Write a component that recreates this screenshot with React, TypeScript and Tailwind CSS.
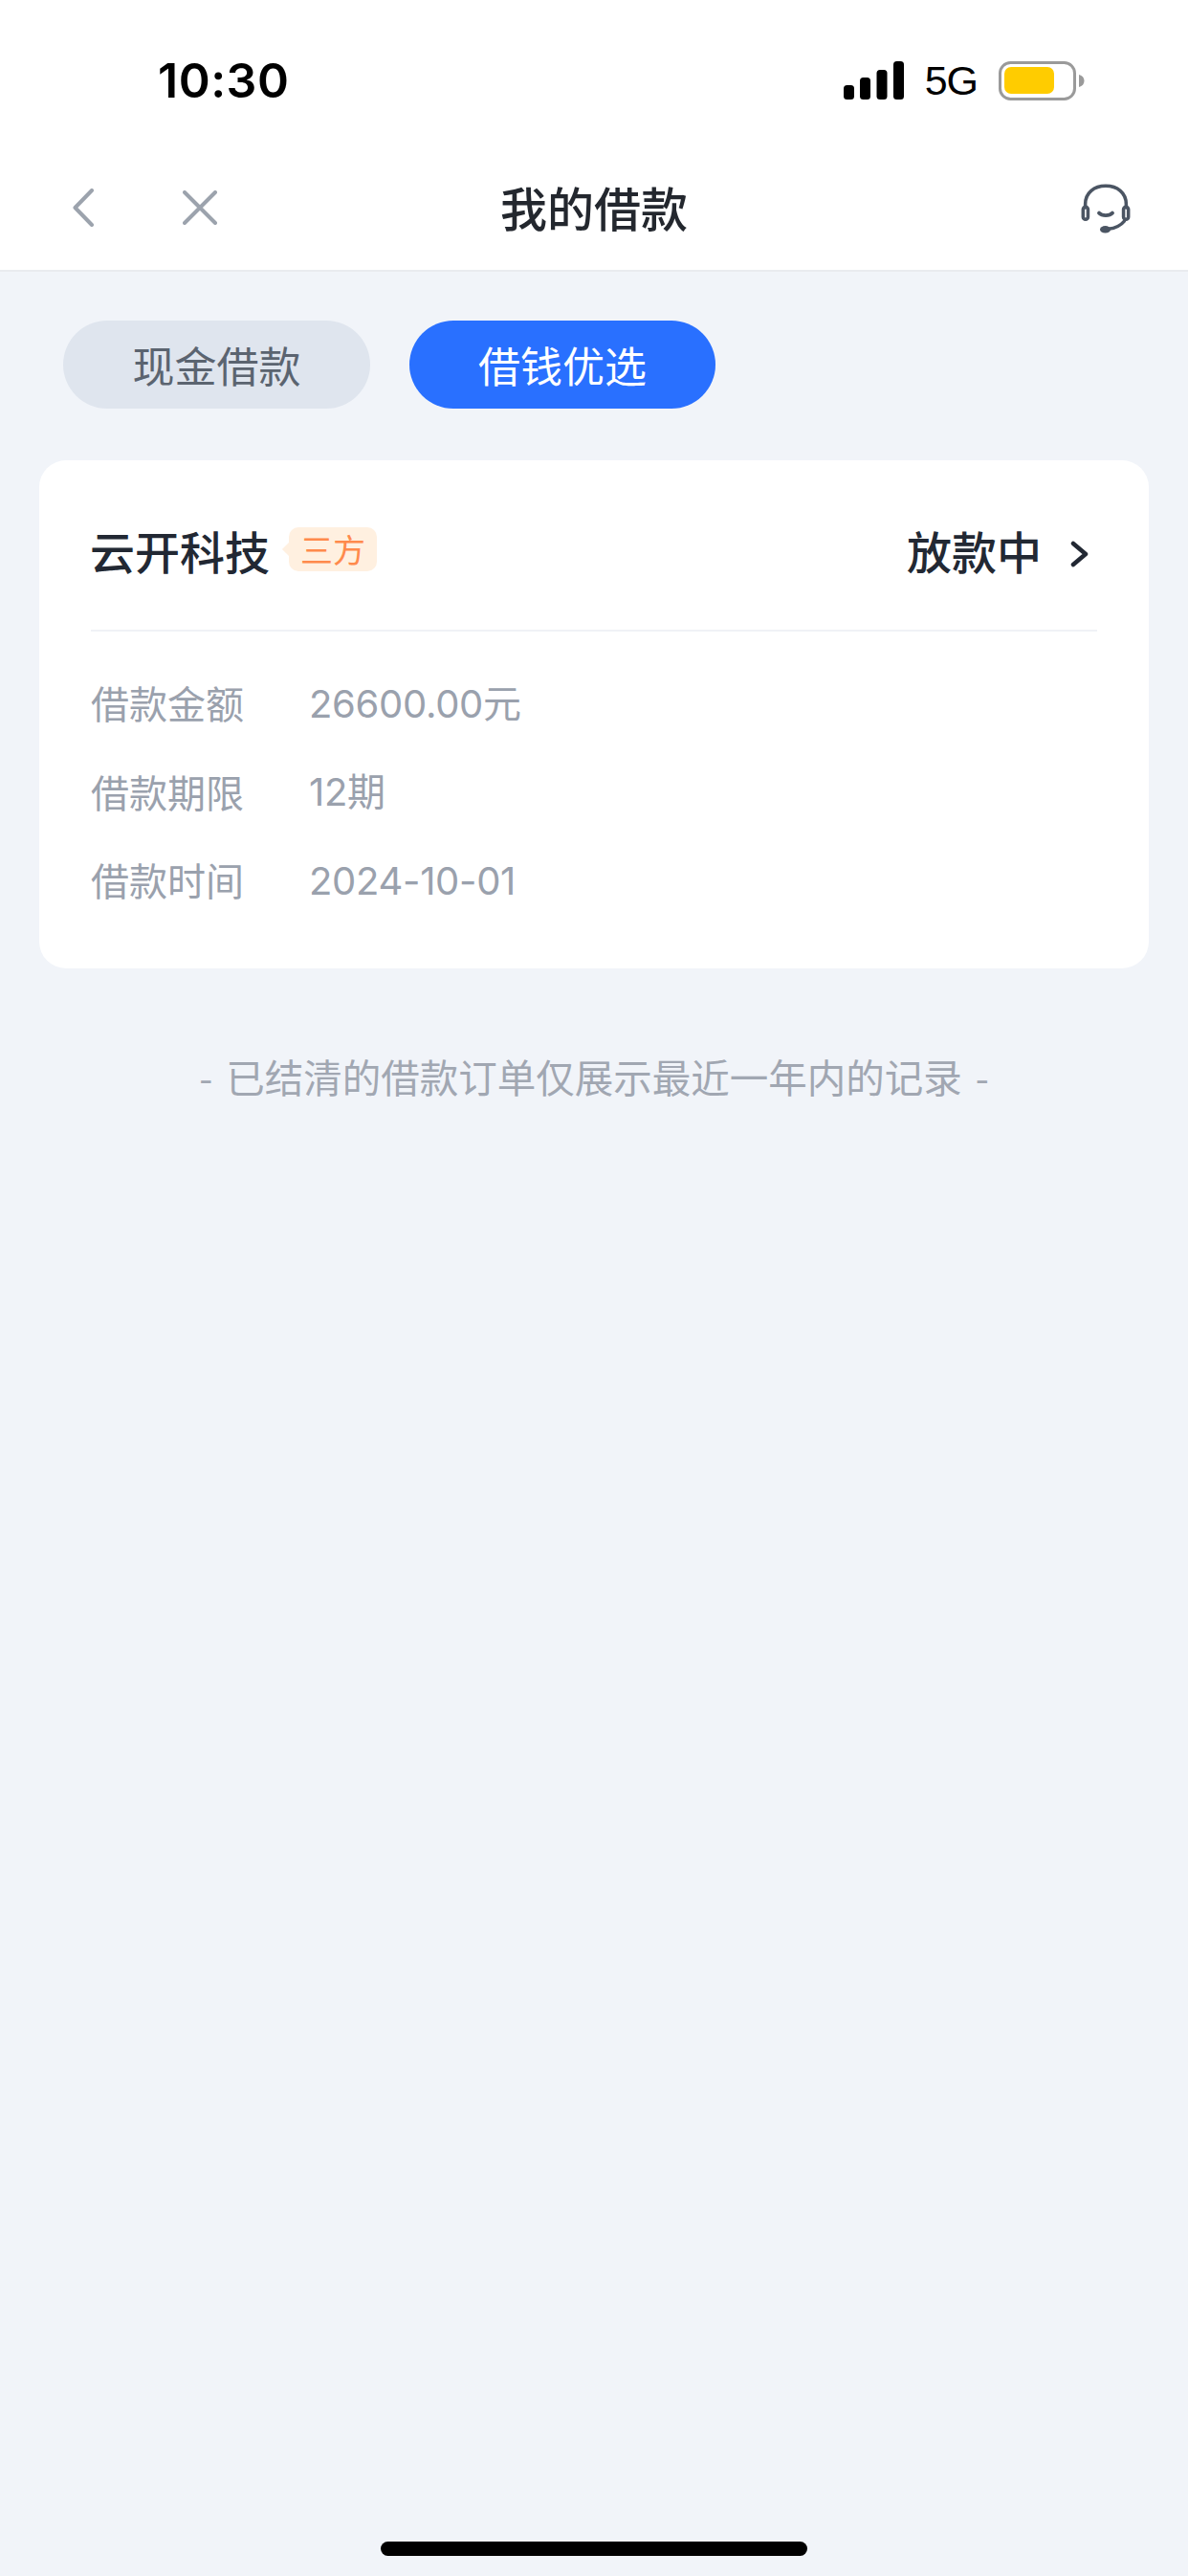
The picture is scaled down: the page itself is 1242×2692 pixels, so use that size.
const CJK = '"Noto Sans CJK SC", "Noto Sans", sans-serif';

function Signal() {
  return (
    <svg width="63" height="40" viewBox="0 0 63 40" className="block" fill="#000">
      <rect x="0" y="25" width="11" height="15" rx="3.5" />
      <rect x="17" y="17" width="11" height="23" rx="3.5" />
      <rect x="34.500" y="9" width="11" height="31" rx="3.5" />
      <rect x="52" y="0" width="11" height="40" rx="3.5" />
    </svg>
  );
}

function Battery() {
  return (
    <svg width="90" height="41" viewBox="0 0 90 41" className="block">
      <rect x="1.500" y="1.500" width="78" height="38" rx="11" fill="none" stroke="#9a9a9a" strokeWidth="3" />
      <rect x="6" y="6" width="52" height="28" rx="7" fill="#ffcc00" />
      <path d="M84 14 C87.500 15 89.500 17 89.500 20.500 C89.500 24 87.500 26 84 27 Z" fill="#9a9a9a" />
    </svg>
  );
}

function Headset() {
  return (
    <svg width="52" height="52" viewBox="0 0 56 56" fill="none" stroke="#4b5563" strokeWidth="3.800" strokeLinecap="round" className="block">
      <path d="M5 27 V23 C5 10 15 2.500 28 2.500 C41 2.500 51 10 51 23 V27" />
      <rect x="2.500" y="26" width="5.500" height="14" rx="2.700" />
      <rect x="48" y="26" width="5.500" height="14" rx="2.700" />
      <path d="M20.500 33 C24 36.500 32 36.500 35.500 33" strokeWidth="4.200" />
      <path d="M49 42 C45 47 39 50 31 51" />
      <ellipse cx="27.500" cy="51.500" rx="6" ry="4" fill="#4b5563" stroke="none" />
    </svg>
  );
}

function Row({ label, value }: { label: string; value: string }) {
  return (
    <div className="flex h-[92.5px] items-center text-[40px] leading-none text-[#9aa1ad]">
      <span className="w-[228px]">{label}</span>
      <span className="pt-[3px] font-['Inter','Noto_Sans_CJK_SC',sans-serif] tracking-[-0.3px]">{value}</span>
    </div>
  );
}

export default function App() {
  return (
    <div className="flex h-[2692px] w-[1242px] flex-col overflow-hidden bg-[#f1f4f9]" style={{ fontFamily: CJK }}>
      <header className="border-b-2 border-[#e9ebef] bg-white">
        <div className="flex h-[150px] items-center justify-between pt-[18px] pl-[165px] pr-[108px]">
          <span className="font-['Inter',sans-serif] text-[50px] leading-none font-semibold tracking-[0.5px] text-black">10:30</span>
          <div className="flex items-center gap-[22px]">
            <Signal />
            <span className="font-['Liberation_Sans',sans-serif] text-[43px] leading-none tracking-[-1px] text-black">5G</span>
            <Battery />
          </div>
        </div>
        <nav className="relative flex h-[132px] items-center justify-center pb-[2px]">
          <div className="absolute top-[47px] left-[76px] flex items-center gap-[93px]">
            <svg width="22" height="40" viewBox="0 0 22 40" fill="none" stroke="#9ca3ad" strokeWidth="4" strokeLinecap="round" strokeLinejoin="round" className="block">
              <path d="M20 2 L2.500 20 L20 38" />
            </svg>
            <svg width="36" height="36" viewBox="0 0 36 36" fill="none" stroke="#9ca3ad" strokeWidth="4" strokeLinecap="round" className="block">
              <path d="M2 2 L34 34 M34 2 L2 34" />
            </svg>
          </div>
          <h1 className="text-[49px] leading-none font-medium text-[#23272e]">我的借款</h1>
          <div className="absolute top-[42px] left-[1130px]">
            <Headset />
          </div>
        </nav>
      </header>

      <div className="flex gap-[41px] pt-[51px] pl-[66px]">
        <div className="flex h-[92px] w-[321px] items-center justify-center rounded-full bg-[#dfe5ee] text-[44px] leading-none text-[#5b6470]">现金借款</div>
        <div className="flex h-[92px] w-[320px] items-center justify-center rounded-full bg-[#2970ff] text-[44px] leading-none text-white">借钱优选</div>
      </div>

      <main className="mx-[41px] mt-[54px] h-[531px] rounded-[28px] bg-white px-[54px]">
        <div className="flex h-[179px] items-center justify-between border-b-2 border-[#f0f2f6] pt-[10px]">
          <div className="-ml-px flex items-center gap-[20px]">
            <span className="text-[47px] leading-none font-medium text-[#222833]">云开科技</span>
            <span className="relative mb-[2px] flex h-[46px] w-[92px] items-center justify-center rounded-[10px] bg-[#fff0e0] text-[34px] leading-none text-[#ff8a4c]">
              三方
              <span className="absolute top-[18px] left-[-5px] h-[10px] w-[10px] rotate-45 bg-[#fff0e0]" />
            </span>
          </div>
          <div className="flex items-center gap-[30px] pr-[8px]">
            <span className="text-[47px] leading-none font-medium text-[#222833]">放款中</span>
            <svg width="20" height="30" viewBox="0 0 20 30" fill="none" stroke="#222833" strokeWidth="4.500" strokeLinecap="round" strokeLinejoin="round" className="mt-[8px] block">
              <path d="M3 4 L16 15 L3 26" />
            </svg>
          </div>
        </div>
        <div className="pt-[28px]">
          <Row label="借款金额" value="26600.00元" />
          <Row label="借款期限" value="12期" />
          <Row label="借款时间" value="2024-10-01" />
        </div>
      </main>

      <p className="mt-[91px] text-center text-[40.500px] leading-[44px] [word-spacing:5px] text-[#a1a7b2]">- 已结清的借款订单仅展示最近一年内的记录 -</p>

      <div className="mt-auto flex justify-center pb-[21px]">
        <div className="h-[15px] w-[446px] rounded-full bg-black" />
      </div>
    </div>
  );
}
